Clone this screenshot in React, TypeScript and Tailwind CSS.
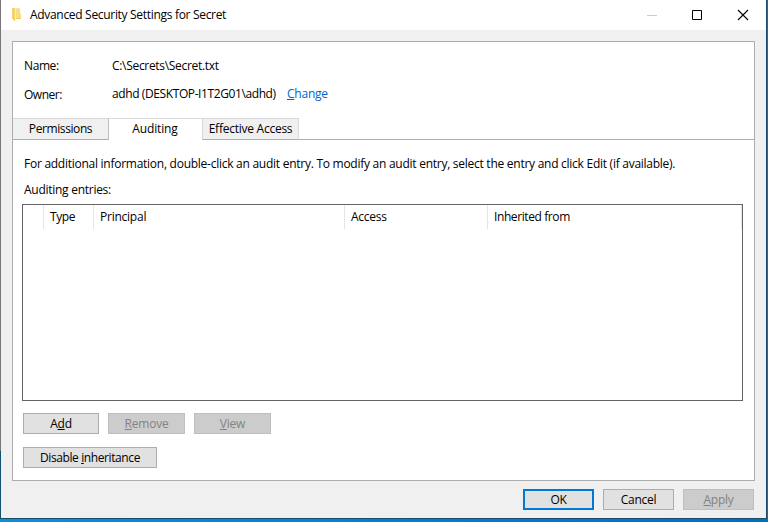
import type { ReactNode } from "react";

function Key({ children }: { children: ReactNode }) {
  return <span className="underline decoration-1 underline-offset-1">{children}</span>;
}

function PushButton({ children, className, disabled }: { children: ReactNode; className: string; disabled?: boolean }) {
  return (
    <button
      type="button"
      disabled={disabled}
      className={`flex h-[21px] shrink-0 items-center justify-center whitespace-nowrap ${
        disabled ? "border-[#bfbfbf] bg-[#cccccc] text-[#838383]" : "border-[#adadad] bg-[#e1e1e1]"
      } ${className}`}
    >
      <span>{children}</span>
    </button>
  );
}

function TitleBar() {
  return (
    <header className="flex h-[30px] shrink-0 items-center bg-white pl-[11px]">
      <svg width="10" height="14" viewBox="0 0 10 14" shapeRendering="crispEdges">
        <path d="M0 0h8v6h1v5H0z" fill="#ffe59b" />
        <path d="M4 1h4v5h1v5H4z" fill="#fadb82" />
        <path d="M3 10h6v1H3z" fill="#eec865" />
        <path d="M0 0h1l2 2v11l-3-2z" fill="#f6d16f" />
        <path d="M3 2h1v10H3z" fill="#ffedb5" />
      </svg>
      <h1 className="ml-[8px] whitespace-nowrap text-[12px] tracking-[-0.31px]">Advanced Security Settings for Secret</h1>
      <svg className="ml-auto mr-[17px]" width="102" height="12" viewBox="0 0 102 12" fill="none">
        <path d="M0 6.5h10" stroke="#cccccc" />
        <path d="M45.5 1.5h9v9h-9z" stroke="#000" />
        <path d="M91 1l10 10M101 1L91 11" stroke="#000" strokeWidth="1.1" />
      </svg>
    </header>
  );
}

function Tabs() {
  return (
    <nav className="flex h-[22px] shrink-0">
      <div className="flex w-[96px] items-center justify-center border-r border-b border-t border-t-[#d9d9d9] border-b-[#adadad] border-r-[#bdbdbd] bg-[#f0f0f0] tracking-[-0.4px]">
        Permissions
      </div>
      <div className="flex w-[93px] items-center justify-center border-t border-[#d9d9d9] bg-white pb-px pr-px tracking-[-0.15px]">
        Auditing
      </div>
      <div className="flex w-[97px] items-center justify-center border border-[#d9d9d9] border-b-[#adadad] bg-[#f0f0f0] tracking-[-0.25px]">
        Effective Access
      </div>
      <div className="flex-1 border-b border-[#adadad]" />
    </nav>
  );
}

function EntryList() {
  return (
    <div className="ml-[9px] h-[197px] w-[721px] shrink-0 border border-[#646464] bg-white">
      <div className="flex h-6 items-center leading-6 [&>div]:h-full [&>div]:border-r [&>div]:border-[#e5e5e5] [&>div]:pl-[6px]">
        <div className="w-[21px]" />
        <div className="w-[50px] tracking-[-0.4px]">Type</div>
        <div className="w-[251px]">Principal</div>
        <div className="w-[143px]">Access</div>
        <div className="w-[254px] tracking-[-0.4px]">Inherited from</div>
      </div>
    </div>
  );
}

export default function App() {
  return (
    <div className="flex h-[522px] w-[768px] flex-col overflow-hidden bg-[#0078c8] font-['Open_Sans','Noto_Sans',sans-serif] text-[12px] leading-[16px] tracking-[-0.24px] text-black">
      <div className="flex h-[519px]">
        <div className="flex w-px flex-col">
          <div className="h-[451px] bg-[#77777a]" />
          <div className="flex-1 bg-[#12506f]" />
        </div>
        <main className="flex w-[766px] flex-col border-r border-b border-[#1c4b70] bg-[#f0f0f0]">
          <TitleBar />
          <section className="ml-[11px] mt-[11px] flex h-[440px] w-[743px] shrink-0 flex-col border border-[#adadad] bg-white">
            <div className="flex h-[76px] shrink-0 flex-col pl-[11px] pt-[16px]">
              <div className="flex">
                <span className="w-[88px] tracking-[-0.4px]">Name:</span>
                <span className="tracking-[-0.31px]">C:\Secrets\Secret.txt</span>
              </div>
              <div className="mt-[12px] flex">
                <span className="w-[88px] pt-px tracking-[-0.5px]">Owner:</span>
                <span className="w-[175px] whitespace-nowrap tracking-[-0.4px]">adhd (DESKTOP-I1T2G01\adhd)</span>
                <a className="text-[#0066cc]">
                  <Key>C</Key>hange
                </a>
              </div>
            </div>
            <Tabs />
            <p className="ml-[11px] mt-[16px] whitespace-nowrap tracking-[-0.262px]">
              For additional information, double-click an audit entry. To modify an audit entry, select the entry and click Edit (if available).
            </p>
            <p className="mb-[6px] ml-[11px] mt-[10px] tracking-[-0.27px]">Auditing entries:</p>
            <EntryList />
            <div className="ml-[10px] mt-[12px] flex">
              <PushButton className="w-[76px] border">
                A<Key>d</Key>d
              </PushButton>
              <PushButton disabled className="ml-[9px] w-[77px] border">
                <Key>R</Key>emove
              </PushButton>
              <PushButton disabled className="ml-[9px] w-[77px] border">
                <Key>V</Key>iew
              </PushButton>
            </div>
            <div className="ml-[10px] mt-[13px] flex">
              <PushButton className="w-[134px] border tracking-[-0.4px]">
                Disable <Key>i</Key>nheritance
              </PushButton>
            </div>
          </section>
          <footer className="mr-[12px] mt-[8px] flex justify-end gap-[9px]">
            <PushButton className="w-[71px] border-2 !border-[#0078d7]">OK</PushButton>
            <PushButton className="w-[71px] border">Cancel</PushButton>
            <PushButton disabled className="w-[71px] border">
              <Key>A</Key>pply
            </PushButton>
          </footer>
        </main>
        <div className="w-px bg-[#0f6fb5]" />
      </div>
      <div className="h-[3px] bg-linear-to-r from-[#0890d8] to-[#0070c0]" />
    </div>
  );
}
